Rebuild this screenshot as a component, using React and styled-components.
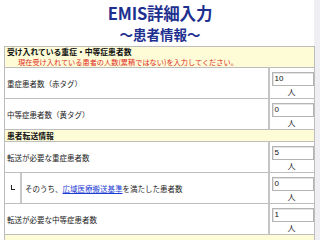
import React from "react";
import styled, { createGlobalStyle } from "styled-components";

const GlobalStyle = createGlobalStyle`
  html, body {
    margin: 0;
    padding: 0;
    background: #fff;
  }
  body {
    width: 320px;
    height: 240px;
    overflow: hidden;
    font-family: "Noto Sans CJK JP", "Noto Sans", sans-serif;
  }
`;

const Page = styled.div`
  width: 320px;
  height: 240px;
  overflow: hidden;
  background: linear-gradient(to right, #fff 314px, #eeeef3 314px);
`;

const Heading = styled.header`
  padding: 2px 0 3px;
  text-align: center;
  color: #1d2f8f;
  font-weight: 700;
`;

const Title = styled.h1`
  margin: 0;
  font-size: 16.5px;
  line-height: 23px;
  font-family: "Noto Sans CJK JP", "Noto Sans", sans-serif;
  letter-spacing: -0.2px;
`;

const Subtitle = styled.h2`
  margin: 0;
  font-size: 13.5px;
  line-height: 18px;
  font-family: "Noto Sans CJK JP", "Noto Sans", sans-serif;
`;

const Table = styled.table`
  margin-left: 4px;
  width: 310px;
  border-collapse: collapse;
  table-layout: fixed;
  background: #fff;
  font-size: 7.5px;
  color: #222;
`;

const Cell = styled.td`
  border: 1px solid #bdbdbd;
  padding: 0 0 0 2px;
  vertical-align: middle;
  height: 30px;
`;

const ValueCell = styled.td`
  border: 1px solid #bdbdbd;
  border-left: 2px solid #c4c4c4;
  padding: 4px 0 0 2px;
  vertical-align: top;
  height: 26px;
`;

const BandCell = styled.td`
  border: 1px solid #bdbdbd;
  background: #fdfcd6;
  padding: 0 2px;
  height: ${(p) => (p.$tall ? "20px" : "11px")};
  line-height: ${(p) => (p.$tall ? "10px" : "11px")};
  vertical-align: middle;
`;

const BandTitle = styled.div`
  font-weight: 700;
  font-size: 7.8px;
  color: #111;
`;

const BandNote = styled.div`
  color: #e0281e;
  padding-left: 11px;
  font-size: 7.2px;
`;

const Input = styled.div`
  width: 38px;
  height: 12px;
  border: 1px solid #b4b4b4;
  box-shadow: inset 1px 1px 0 #e4e4e4;
  font-size: 8px;
  line-height: 12px;
  padding-left: 2px;
  color: #111;
  font-family: "Liberation Sans", Arial, sans-serif;
`;

const Unit = styled.div`
  width: 40px;
  text-align: center;
  line-height: 10px;
  margin-top: 1px;
  font-size: 8px;
`;

const SubRow = styled.div`
  display: flex;
  align-items: stretch;
  height: 30px;
  margin-left: -2px;
`;

const Marker = styled.div`
  width: 15px;
  border-right: 2px solid #c8c8c8;
  display: flex;
  align-items: center;
  justify-content: center;
`;

const Corner = styled.span`
  display: block;
  width: 3px;
  height: 4px;
  border-left: 1.5px solid #222;
  border-bottom: 1.5px solid #222;
  margin-top: -2px;
`;

const SubLabel = styled.div`
  display: flex;
  align-items: center;
  padding-left: 3px;
`;

const Link = styled.a`
  color: #1a3bd6;
  text-decoration: underline;
`;

const ValueBox = ({ value }) => (
  <ValueCell>
    <Input>{value}</Input>
    <Unit>人</Unit>
  </ValueCell>
);

const rowsA = [
  { label: "重症患者数（赤タグ）", value: "10" },
  { label: "中等症患者数（黄タグ）", value: "0" },
];

export default function App() {
  return (
    <Page>
      <GlobalStyle />
      <Heading>
        <Title>EMIS詳細入力</Title>
        <Subtitle>〜患者情報〜</Subtitle>
      </Heading>
      <Table>
        <colgroup>
          <col style={{ width: 264 }} />
          <col style={{ width: 46 }} />
        </colgroup>
        <tbody>
          <tr>
            <BandCell colSpan={2} $tall>
              <BandTitle>受け入れている重症・中等症患者数</BandTitle>
              <BandNote>現在受け入れている患者の人数(累積ではない)を入力してください。</BandNote>
            </BandCell>
          </tr>
          {rowsA.map((r) => (
            <tr key={r.label}>
              <Cell>{r.label}</Cell>
              <ValueBox value={r.value} />
            </tr>
          ))}
          <tr>
            <BandCell colSpan={2}>
              <BandTitle>患者転送情報</BandTitle>
            </BandCell>
          </tr>
          <tr>
            <Cell>転送が必要な重症患者数</Cell>
            <ValueBox value="5" />
          </tr>
          <tr>
            <Cell>
              <SubRow>
                <Marker>
                  <Corner />
                </Marker>
                <SubLabel>
                  そのうち、<Link href="#">広域医療搬送基準</Link>を満たした患者数
                </SubLabel>
              </SubRow>
            </Cell>
            <ValueBox value="0" />
          </tr>
          <tr>
            <Cell>転送が必要な中等症患者数</Cell>
            <ValueBox value="1" />
          </tr>
          <tr>
            <BandCell colSpan={2}>&nbsp;</BandCell>
          </tr>
        </tbody>
      </Table>
    </Page>
  );
}
